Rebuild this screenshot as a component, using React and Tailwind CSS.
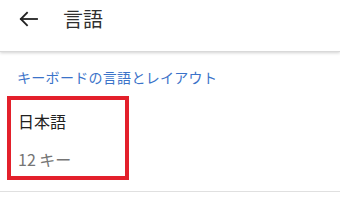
export default function App() {
  return (
    <div className="relative w-[340px] h-[216px] overflow-hidden bg-white font-['Noto_Sans_CJK_JP','Noto_Sans',sans-serif] text-[#212121]">
      {/* Top bar */}
      <header className="h-[52px] bg-white border-b border-[#d9d9d9] shadow-[0_1px_3px_rgba(0,0,0,0.18)]">
        <div className="flex items-center h-[38px]">
          <button className="ml-[16px] w-[24px] h-[24px] flex items-center justify-center">
            <svg width="24" height="24" viewBox="0 0 24 24" fill="none" stroke="#222" strokeWidth="1.8" strokeLinecap="square">
              <path d="M5 12h16" />
              <path d="M11 5.8 4.8 12l6.2 6.2" />
            </svg>
          </button>
          <h1 className="ml-[23px] text-[20px] leading-[28px] text-[#303030]">言語</h1>
        </div>
      </header>

      {/* Section */}
      <div className="pt-[15px]">
        <p className="pl-[17px] text-[14px] leading-[20px] tracking-[0.3px] text-[#3b73c9]">キーボードの言語とレイアウト</p>
        <div className="pl-[18px] pt-[24px] pb-[22px] border-b border-[#e0e0e0]">
          <p className="text-[16px] leading-[20px] text-[#212121]">日本語</p>
          <p className="mt-[18px] text-[16px] leading-[20px] text-[#757575]">12 キー</p>
        </div>
      </div>

      {/* Highlight annotation */}
      <div className="absolute left-[7px] top-[96px] w-[122px] h-[84px] border-4 border-[#e3202b]" />
    </div>
  );
}
